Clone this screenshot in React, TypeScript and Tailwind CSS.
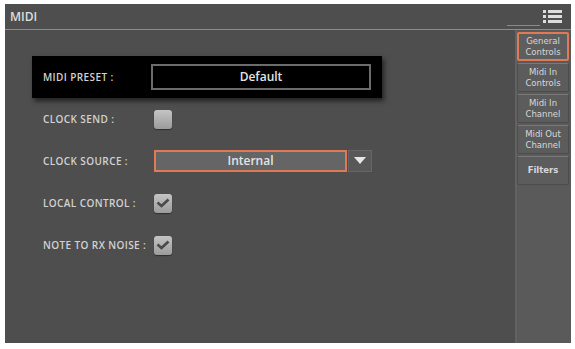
import React from "react";

const font = { fontFamily: '"Open Sans", "Liberation Sans", sans-serif' };

function Check({ checked }: { checked: boolean }) {
  return (
    <div className="w-[18px] h-[19px] rounded-[3px] bg-gradient-to-b from-[#c4c4c4] to-[#9c9c9c] flex items-center justify-center shadow-[0_1px_1px_rgba(0,0,0,0.4)]">
      {checked && (
        <svg width="14" height="10" viewBox="0 0 14 10">
          <path d="M1.5 4.5 L5.5 8 L12.5 1.5" fill="none" stroke="#4a4a4a" strokeWidth="2.6" />
        </svg>
      )}
    </div>
  );
}

function Row({ label, children }: { label: string; children: React.ReactNode }) {
  return (
    <div className="h-[42px] flex items-center">
      <span className="w-[111px] text-[10px] font-semibold tracking-[0.04em] text-[#d2d2d2] whitespace-nowrap">{label}</span>
      {children}
    </div>
  );
}

const tabs = [
  ["General", "Controls"],
  ["Midi In", "Controls"],
  ["Midi In", "Channel"],
  ["Midi Out", "Channel"],
  ["Filters"],
];

export default function App() {
  return (
    <div className="w-[575px] h-[349px] bg-white pl-[5px] pt-[4px]" style={font}>
      <div className="w-[566px] h-[339px] bg-[#4e4e4e] flex flex-col">
        {/* header */}
        <div className="h-[26px] shrink-0 border-b border-[#8c8c8c] flex items-center justify-between relative">
          <span className="pl-[5px] text-[12px] font-semibold text-[#dedede]">MIDI</span>
          <div className="absolute left-[502px] top-[21px] w-[33px] h-px bg-[#8a8a8a]" />
          <div className="mr-[9px] flex flex-col gap-[2px]">
            {[0, 1, 2].map((i) => (
              <div key={i} className="flex gap-[2px]">
                <div className="w-[3px] h-[3px] bg-[#dcdcdc]" />
                <div className="w-[14px] h-[3px] bg-[#dcdcdc]" />
              </div>
            ))}
          </div>
        </div>

        <div className="flex flex-1">
          {/* main content */}
          <div className="flex-1 pt-[26px] pl-[27px]">
            <div className="w-[350px] h-[42px] bg-black flex items-center pl-[11px] shadow-[2px_3px_5px_rgba(0,0,0,0.6)]">
              <span className="w-[108px] text-[10px] font-semibold tracking-[0.04em] text-[#d2d2d2]">MIDI PRESET :</span>
              <div className="w-[220px] h-[26px] border-2 border-[#6c6c6c] flex items-center justify-center text-[12px] font-semibold text-[#e4e4e4]">
                Default
              </div>
            </div>
            <div className="pl-[11px]">
              <Row label="CLOCK SEND :">
                <Check checked={false} />
              </Row>
              <Row label="CLOCK SOURCE :">
                <div className="flex">
                  <div className="w-[193px] h-[22px] border-2 border-[#e07a56] bg-[#656565] flex items-center justify-center text-[12px] font-semibold text-[#e4e4e4]">
                    Internal
                  </div>
                  <div className="w-[24px] h-[22px] ml-px bg-[#585858] border border-[#666] flex items-center justify-center">
                    <svg width="12" height="8" viewBox="0 0 12 8">
                      <path d="M0 0 H12 L6 7 Z" fill="#e6e6e6" />
                    </svg>
                  </div>
                </div>
              </Row>
              <Row label="LOCAL CONTROL :">
                <Check checked />
              </Row>
              <Row label="NOTE TO RX NOISE :">
                <Check checked />
              </Row>
            </div>
          </div>

          {/* sidebar */}
          <div className="w-[56px] border-l-2 border-[#626262] bg-[#5a5a5a] pt-[2px] pr-[2px] flex flex-col gap-[2px]">
            {tabs.map((t, i) => (
              <div
                key={i}
                className={`h-[29px] rounded-[2px] flex flex-col items-center justify-center leading-[11px] text-[8.5px] text-[#d8d8d8] font-['DejaVu_Sans',sans-serif] ${
                  i === 0
                    ? "border-2 border-[#e07a56] bg-[#5e5e5e]"
                    : "border border-[#4c4c4c] border-t-[#7a7a7a] bg-[#5c5c5c]"
                } ${t.length === 1 ? "font-bold" : ""}`}
              >
                {t.map((l) => (
                  <span key={l}>{l}</span>
                ))}
              </div>
            ))}
          </div>
        </div>
      </div>
    </div>
  );
}
